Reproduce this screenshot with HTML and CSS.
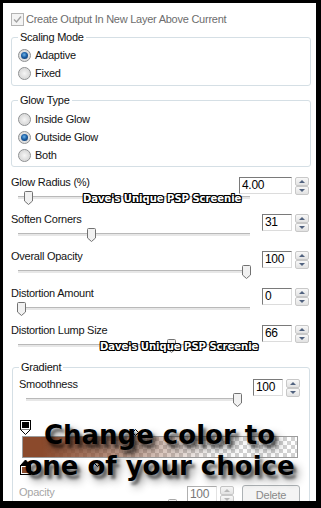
FILE: index.html
```html
<!DOCTYPE html>
<html>
<head>
<meta charset="utf-8">
<link rel="stylesheet" href="styles.css">
</head>
<body>
<div class="dialog">
  <div class="check-row">
    <span class="checkbox"><svg width="13" height="13" viewBox="0 0 13 13"><rect x="0.5" y="0.5" width="12" height="12" fill="#f4f4f4" stroke="#b4b4b4"/><path d="M3 6.5 L5.5 9 L10 3.5" fill="none" stroke="#a2a2a2" stroke-width="1.4"/></svg></span>
    <span class="check-label">Create Output In New Layer Above Current</span>
  </div>

  <fieldset class="group group-scaling">
    <legend>Scaling Mode</legend>
    <div class="radio-row"><span class="radio checked"></span><span>Adaptive</span></div>
    <div class="radio-row"><span class="radio"></span><span>Fixed</span></div>
  </fieldset>

  <fieldset class="group group-glow">
    <legend>Glow Type</legend>
    <div class="radio-row"><span class="radio"></span><span>Inside Glow</span></div>
    <div class="radio-row"><span class="radio checked"></span><span>Outside Glow</span></div>
    <div class="radio-row"><span class="radio"></span><span>Both</span></div>
  </fieldset>

  <div class="param param-first">
    <div class="param-head">
      <span class="param-label">Glow Radius (%)</span>
      <div class="spin-edit">
        <span class="num-box num-wide">4.00</span>
        <span class="spinner"><span class="spin-btn up"></span><span class="spin-btn down"></span></span>
      </div>
    </div>
    <div class="slider"><span class="thumb" style="left:6px"><svg width="9" height="14" viewBox="0 0 9 14"><path d="M0.5 1.5 Q0.5 0.5 1.5 0.5 H7.5 Q8.5 0.5 8.5 1.5 V10 L4.5 13.5 L0.5 10 Z" fill="#f1f1f1" stroke="#727272"/></svg></span></div>
  </div>

  <div class="param">
    <div class="param-head">
      <span class="param-label">Soften Corners</span>
      <div class="spin-edit">
        <span class="num-box">31</span>
        <span class="spinner"><span class="spin-btn up"></span><span class="spin-btn down"></span></span>
      </div>
    </div>
    <div class="slider"><span class="thumb" style="left:69px"><svg width="9" height="14" viewBox="0 0 9 14"><path d="M0.5 1.5 Q0.5 0.5 1.5 0.5 H7.5 Q8.5 0.5 8.5 1.5 V10 L4.5 13.5 L0.5 10 Z" fill="#f1f1f1" stroke="#727272"/></svg></span></div>
  </div>

  <div class="param">
    <div class="param-head">
      <span class="param-label">Overall Opacity</span>
      <div class="spin-edit">
        <span class="num-box">100</span>
        <span class="spinner"><span class="spin-btn up"></span><span class="spin-btn down"></span></span>
      </div>
    </div>
    <div class="slider"><span class="thumb" style="left:224px"><svg width="9" height="14" viewBox="0 0 9 14"><path d="M0.5 1.5 Q0.5 0.5 1.5 0.5 H7.5 Q8.5 0.5 8.5 1.5 V10 L4.5 13.5 L0.5 10 Z" fill="#f1f1f1" stroke="#727272"/></svg></span></div>
  </div>

  <div class="param">
    <div class="param-head">
      <span class="param-label">Distortion Amount</span>
      <div class="spin-edit">
        <span class="num-box">0</span>
        <span class="spinner"><span class="spin-btn up"></span><span class="spin-btn down"></span></span>
      </div>
    </div>
    <div class="slider"><span class="thumb" style="left:-1px"><svg width="9" height="14" viewBox="0 0 9 14"><path d="M0.5 1.5 Q0.5 0.5 1.5 0.5 H7.5 Q8.5 0.5 8.5 1.5 V10 L4.5 13.5 L0.5 10 Z" fill="#f1f1f1" stroke="#727272"/></svg></span></div>
  </div>

  <div class="param">
    <div class="param-head">
      <span class="param-label">Distortion Lump Size</span>
      <div class="spin-edit">
        <span class="num-box">66</span>
        <span class="spinner"><span class="spin-btn up"></span><span class="spin-btn down"></span></span>
      </div>
    </div>
    <div class="slider"><span class="thumb" style="left:149px"><svg width="9" height="14" viewBox="0 0 9 14"><path d="M0.5 1.5 Q0.5 0.5 1.5 0.5 H7.5 Q8.5 0.5 8.5 1.5 V10 L4.5 13.5 L0.5 10 Z" fill="#f1f1f1" stroke="#727272"/></svg></span></div>
  </div>

  <fieldset class="group group-gradient">
    <legend>Gradient</legend>
    <div class="param param-inner">
      <div class="param-head">
        <span class="param-label">Smoothness</span>
        <div class="spin-edit">
          <span class="num-box">100</span>
          <span class="spinner"><span class="spin-btn up"></span><span class="spin-btn down"></span></span>
        </div>
      </div>
      <div class="slider slider-inner"><span class="thumb" style="left:207px"><svg width="9" height="14" viewBox="0 0 9 14"><path d="M0.5 1.5 Q0.5 0.5 1.5 0.5 H7.5 Q8.5 0.5 8.5 1.5 V10 L4.5 13.5 L0.5 10 Z" fill="#f1f1f1" stroke="#727272"/></svg></span></div>
    </div>

    <div class="grad-editor">
      <div class="stops stops-top">
        <span class="stop" style="left:0"><svg width="11" height="16" viewBox="0 0 11 16"><rect x="0.5" y="0.5" width="10" height="9" fill="#fff" stroke="#000"/><rect x="2" y="2" width="7" height="6" fill="#000"/><path d="M0.5 9.5 L5.5 14.5 L10.5 9.5" fill="#fff" stroke="#000"/></svg></span>
        <span class="mid" style="left:112px;top:9px"><svg width="7" height="7" viewBox="0 0 7 7"><path d="M3.5 0.5 L6.5 3.5 L3.5 6.5 L0.5 3.5 Z" fill="#fff" stroke="#000"/></svg></span>
      </div>
      <div class="grad-bar"></div>
      <div class="stops stops-bottom">
        <span class="stop" style="left:0;top:1px"><svg width="11" height="16" viewBox="0 0 11 16"><path d="M0.5 6.5 L5.5 1 L10.5 6.5 Z" fill="#000" stroke="#000"/><rect x="0.5" y="6.5" width="10" height="9" fill="#fff" stroke="#000"/><rect x="2" y="8" width="7" height="6" fill="#8b4a2c"/></svg></span>
        <span class="mid" style="left:74px;top:2px"><svg width="7" height="7" viewBox="0 0 7 7"><path d="M3.5 0.5 L6.5 3.5 L3.5 6.5 L0.5 3.5 Z" fill="#fff" stroke="#000"/></svg></span>
      </div>
    </div>

    <div class="opacity-row">
      <span class="param-label disabled">Opacity</span>
      <div class="spin-edit spin-disabled">
        <span class="num-box num-dis">100</span>
        <span class="spinner"><span class="spin-btn up"></span><span class="spin-btn down"></span></span>
      </div>
      <span class="btn-delete">Delete</span>
    </div>
    <div class="slider slider-opacity"><span class="thumb" style="left:142px"><svg width="9" height="14" viewBox="0 0 9 14"><path d="M0.5 1.5 Q0.5 0.5 1.5 0.5 H7.5 Q8.5 0.5 8.5 1.5 V10 L4.5 13.5 L0.5 10 Z" fill="#f4f4f4" stroke="#a8a8a8"/></svg></span></div>
  </fieldset>

  <div class="watermark wm-1">Dave's Unique PSP Screenie</div>
  <div class="watermark wm-2">Dave's Unique PSP Screenie</div>

  <div class="callout">Change color to<br>one of your choice</div>
</div>
</body>
</html>
```

FILE: styles.css
```css
* { box-sizing: border-box; }

html, body {
  margin: 0;
  padding: 0;
}

body {
  background: #000;
  width: 321px;
  height: 508px;
  overflow: hidden;
  font-family: "Liberation Sans", Arial, sans-serif;
  font-size: 11px;
  letter-spacing: -0.25px;
  color: #141414;
}

.dialog {
  position: relative;
  margin: 3px 5px 0 3px;
  width: 313px;
  height: 498px;
  background: #fff;
  padding: 10px 5px 0 8px;
  overflow: hidden;
}

/* checkbox */
.check-row {
  display: flex;
  align-items: center;
  gap: 2px;
  height: 13px;
  line-height: 13px;
  color: #6d6d6d;
}
.checkbox { display: flex; width: 13px; height: 13px; }

/* group boxes */
.group {
  margin: 5px 0 0;
  padding: 2px 0 3px 6px;
  border: 1px solid #d5dfe5;
  border-radius: 3px;
  min-width: 0;
}
.group legend {
  padding: 0 2px;
  line-height: 13px;
  color: #111;
}
.group-glow {
  margin-top: 8px;
  padding-top: 3px;
  padding-bottom: 2px;
}
.group-gradient {
  margin: 2px 1px 0 1px;
  padding: 2px 9px 0 6px;
  height: 150px;
}

.radio-row {
  display: flex;
  align-items: center;
  gap: 4px;
  height: 18px;
  line-height: 13px;
}
.radio {
  position: relative;
  flex: none;
  width: 13px;
  height: 13px;
  border-radius: 50%;
  border: 1px solid #8d8f91;
  background: radial-gradient(circle at 50% 50%, #f6f6f6 0, #dcdcdc 60%, #eeeeee 100%);
}
.radio.checked::after {
  content: "";
  position: absolute;
  left: 2px;
  top: 2px;
  width: 7px;
  height: 7px;
  border-radius: 50%;
  background: radial-gradient(circle at 45% 40%, #6fb4e6 0, #1b5fa6 45%, #0a2d58 100%);
}

/* parameter blocks */
.param {
  height: 37px;
  margin-right: 2px;
}
.param-first { margin-top: 7px; }
.param-inner { margin-right: 0; }

.param-head {
  display: flex;
  justify-content: space-between;
  align-items: flex-start;
  height: 21px;
}
.param-label {
  margin-top: 2px;
  line-height: 13px;
}
.param-label.disabled { color: #a6a6a6; }

.spin-edit {
  display: flex;
  gap: 3px;
  margin-top: 3px;
}
.num-box {
  display: block;
  width: 30px;
  height: 17px;
  border: 1px solid;
  border-color: #7a7a7a #dcdcdc #dcdcdc #7a7a7a;
  background: #fff;
  padding-left: 2px;
  font-size: 12px;
  line-height: 15px;
  letter-spacing: -0.3px;
  color: #000;
}
.num-wide { width: 53px; }
.num-dis {
  color: #777;
  border-color: #b0b0b0 #e2e2e2 #e2e2e2 #b0b0b0;
}

.spinner {
  display: flex;
  flex-direction: column;
  width: 14px;
  height: 18px;
}
.spin-btn {
  position: relative;
  height: 9px;
  border: 1px solid #c8c8c8;
  border-radius: 2px;
  background: linear-gradient(#f8f8f8, #e2e2e2);
}
.spin-btn::after {
  content: "";
  position: absolute;
  left: 3px;
  top: 2px;
  border-left: 3px solid transparent;
  border-right: 3px solid transparent;
}
.spin-btn.up::after { border-bottom: 3px solid #51627f; }
.spin-btn.down::after { border-top: 3px solid #51627f; }
.spin-disabled .spin-btn.up::after { border-bottom-color: #b8b8b8; }
.spin-disabled .spin-btn.down::after { border-top-color: #b8b8b8; }

/* sliders */
.slider {
  position: relative;
  height: 14px;
  margin-top: -4px;
  margin-left: 7px;
  width: 232px;
}
.slider::before {
  content: "";
  position: absolute;
  left: 0;
  right: 0;
  top: 5px;
  height: 2px;
  border-top: 1px solid #b9b9b9;
  background: #e7e7e7;
}
.slider-inner { width: 215px; }
.slider-opacity { margin-top: 0; width: 215px; }
.thumb {
  position: absolute;
  top: 0;
  display: flex;
  width: 9px;
  height: 14px;
}

/* gradient editor */
.grad-editor {
  margin-top: 7px;
  margin-left: 1px;
}
.stops {
  position: relative;
  height: 16px;
}
.stop, .mid {
  position: absolute;
  top: 0;
  display: flex;
}
.grad-bar {
  margin-left: 2px;
  width: 276px;
  height: 22px;
  border: 1px solid #9c9c9c;
  background:
    linear-gradient(to right, #8b4a2c 0, #8b4a2c 7%, rgba(139, 74, 44, 0.55) 35%, rgba(139, 74, 44, 0) 70%),
    repeating-conic-gradient(#d2d2d2 0 25%, #ffffff 0 50%) 0 0 / 8px 8px;
}

.opacity-row {
  display: flex;
  align-items: flex-start;
  height: 15px;
  margin-top: 10px;
}
.opacity-row .spin-edit {
  margin-left: auto;
  margin-top: 2px;
}
.btn-delete {
  display: block;
  margin-left: 8px;
  margin-top: 1px;
  width: 58px;
  height: 22px;
  border: 1px solid #adb2b5;
  border-radius: 3px;
  background: #f4f4f4;
  color: #8a8a8a;
  text-align: center;
  line-height: 19px;
}

/* overlays */
.watermark {
  position: absolute;
  font-family: "DejaVu Sans", sans-serif;
  font-weight: bold;
  font-size: 10px;
  line-height: 10px;
  letter-spacing: 0;
  color: #fff;
  white-space: nowrap;
  text-shadow: 1px 0 #000, -1px 0 #000, 0 1px #000, 0 -1px #000,
    1px 1px #000, -1px -1px #000, 1px -1px #000, -1px 1px #000;
}
.wm-1 { left: 80px; top: 191px; }
.wm-2 { left: 97px; top: 339px; }

.callout {
  position: absolute;
  left: 0;
  right: 0;
  top: 417px;
  text-align: center;
  font-family: "DejaVu Sans", sans-serif;
  font-weight: bold;
  font-size: 26px;
  line-height: 31px;
  letter-spacing: 0;
  color: #000;
  text-shadow: 3px 4px 3px rgba(0, 0, 0, 0.5), 5px 6px 8px rgba(0, 0, 0, 0.45);
}
```
